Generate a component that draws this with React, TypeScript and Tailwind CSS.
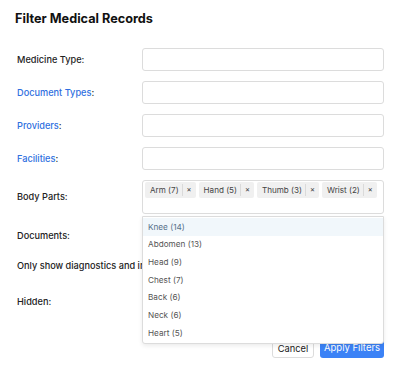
import React from 'react';

const Label: React.FC<{ text: string; link?: boolean }> = ({ text, link }) => (
  <div className="w-[127px] shrink-0 pl-[2px] text-[9.2px] font-medium text-[#222] whitespace-nowrap">
    {link ? (
      <>
        <span className="text-[#2f6fe0]">{text}</span>:
      </>
    ) : (
      <span>{text}:</span>
    )}
  </div>
);

const TextRow: React.FC<{ label: string; link?: boolean }> = ({ label, link }) => (
  <div className="flex items-center h-[23px]">
    <Label text={label} link={link} />
    <div className="flex-1 h-full rounded-[3px] border border-[#dcdcdc] bg-white" />
  </div>
);

const App: React.FC = () => {
  const tags = ['Arm (7)', 'Hand (5)', 'Thumb (3)', 'Wrist (2)'];
  const options = ['Knee (14)', 'Abdomen (13)', 'Head (9)', 'Chest (7)', 'Back (6)', 'Neck (6)', 'Heart (5)'];

  return (
    <div className="w-[396px] h-[370px] bg-white pl-[15px] pr-[12px] pt-[10px] font-['Inter',sans-serif] relative overflow-hidden">
      <h1 className="text-[12.7px] font-bold text-[#111] leading-[18px]">Filter Medical Records</h1>

      <div className="mt-[20px] flex flex-col gap-[10px]">
        <TextRow label="Medicine Type" />
        <TextRow label="Document Types" link />
        <TextRow label="Providers" link />
        <TextRow label="Facilities" link />

        <div className="flex items-center h-[34px]">
          <Label text="Body Parts" />
          <div className="relative flex-1 h-full rounded-[3px] border border-[#dcdcdc] bg-white pl-[2px] pt-[1px]">
            <div className="flex gap-[3px]">
              {tags.map((t) => (
                <div
                  key={t}
                  className="flex items-center h-[16px] bg-[#f0f0f0] rounded-[2px] text-[8.1px] text-[#444] whitespace-nowrap"
                >
                  <span className="pl-[5px] pr-[3px]">{t}</span>
                  <span className="h-[12px] flex items-center px-[4px] border-l border-[#dadada] text-[7.5px] leading-none">
                    ×
                  </span>
                </div>
              ))}
            </div>

            <div className="absolute left-[-1px] right-[-1px] top-[35px] z-10 bg-white border border-[#dcdcdc] rounded-b-[3px] shadow-[0_2px_4px_rgba(0,0,0,0.08)] py-[1px]">
              {options.map((o, i) => (
                <div
                  key={o}
                  className={`h-[17.7px] flex items-center px-[5px] text-[8.2px] ${
                    i === 0 ? 'bg-[#f1f7fb] text-[#56708a]' : 'text-[#555]'
                  }`}
                >
                  {o}
                </div>
              ))}
            </div>
          </div>
        </div>

        <div className="flex items-center h-[23px]">
          <Label text="Documents" />
        </div>
        <div className="flex items-center h-[18px]">
          <div className="pl-[2px] text-[9.2px] font-medium text-[#222] whitespace-nowrap">
            Only show diagnostics and imaging records
          </div>
        </div>
        <div className="flex items-center h-[23px] mt-[5px]">
          <Label text="Hidden" />
        </div>
      </div>

      <div className="mt-[26px] flex justify-end gap-[6px]">
        <button className="h-[19px] w-[42px] rounded-[3px] border border-[#dcdcdc] bg-white text-[9.3px] text-[#222]">
          Cancel
        </button>
        <button className="h-[19px] w-[64px] rounded-[3px] bg-[#3b82f6] text-[9.5px] text-white">
          Apply Filters
        </button>
      </div>
    </div>
  );
};

export default App;
